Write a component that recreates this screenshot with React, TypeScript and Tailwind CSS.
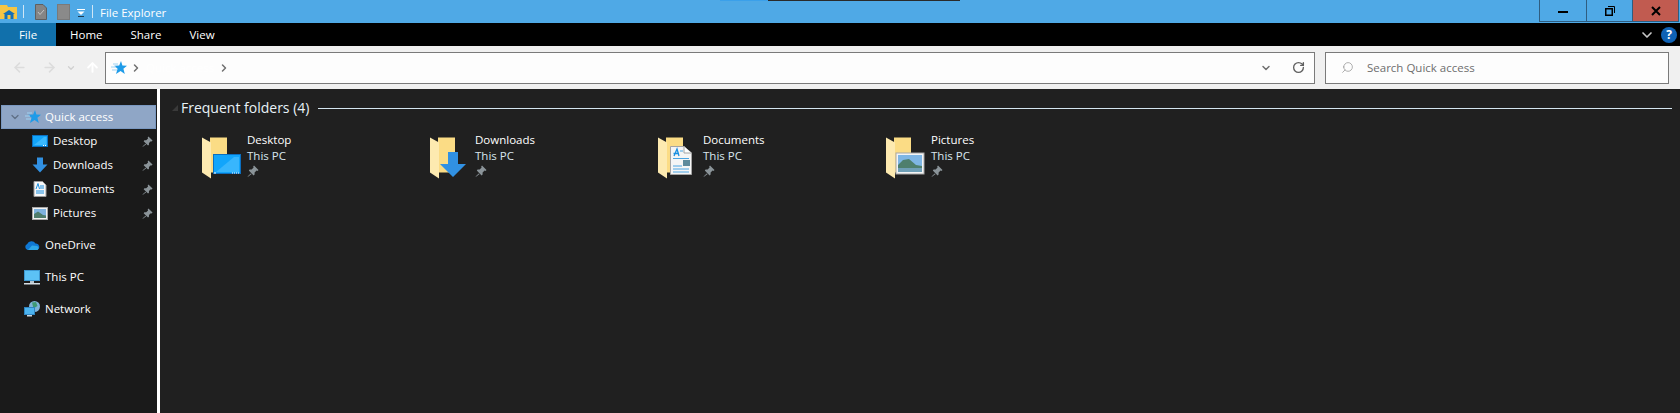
import { ArrowLeft, ArrowRight, ArrowUp, ChevronDown, ChevronRight, RotateCw, Search } from "lucide-react";

const font = "font-['Open_Sans','Noto_Sans',sans-serif]";

function Pin({ className = "" }: { className?: string }) {
  return (
    <svg viewBox="0 0 12 12" className={`w-3 h-3 ${className}`}>
      <path d="M7 0.5 L11.5 5 L10.5 6 L9.6 5.6 L7.6 7.6 L7.6 9.6 L6.6 10.4 L1.8 5.6 L2.6 4.6 L4.6 4.6 L6.6 2.6 L6.2 1.5 Z" fill="#8b9499" />
      <path d="M3.8 8.4 L0.5 11.5 L1 11.8 L4.6 9 Z" fill="#8b9499" />
    </svg>
  );
}

function StarIcon() {
  return (
    <svg viewBox="0 0 16 14" className="w-4 h-[14px]">
      <path d="M10 0 L11.4 4.6 L16 4.8 L12.4 7.8 L13.8 13 L9.6 10 L5 13 L6.6 7.8 L3.2 4.8 L8.2 4.6 Z" fill="#1e9be8" />
      <path d="M2 3 H7 M0 6 H5 M1 9 H6" stroke="#9fd2f2" strokeWidth="1" />
    </svg>
  );
}

function DesktopGlyph() {
  return (
    <svg viewBox="0 0 16 12" className="w-4 h-3">
      <rect x="0.5" y="0.5" width="15" height="11" fill="#12a5fb" stroke="#0b6fc0" />
      <path d="M2 10 L12 2 H14.5 V10 Z" fill="#3bb8fd" />
      <path d="M11 10.5 H15" stroke="#fff" strokeWidth="1" strokeDasharray="1 1" />
    </svg>
  );
}

function DownloadGlyph() {
  return (
    <svg viewBox="0 0 16 16" className="w-4 h-4">
      <path d="M5 0.5 H11 V7.5 H15.5 L8 15.5 L0.5 7.5 H5 Z" fill="#3191e3" />
    </svg>
  );
}

function DocumentGlyph() {
  return (
    <svg viewBox="0 0 14 16" className="w-[14px] h-4">
      <path d="M1 0.5 H9.5 L13 4 V15.5 H1 Z" fill="#f7f7f7" stroke="#9a9a9a" />
      <path d="M3 8 L5 2.5 L6.5 8 M3 10 H11 M3 12 H11 M7 5 H11 M7 7 H11" stroke="#1b8fe0" strokeWidth="1" fill="none" />
    </svg>
  );
}

function PictureGlyph() {
  return (
    <svg viewBox="0 0 16 13" className="w-4 h-[13px]">
      <rect x="0.5" y="0.5" width="15" height="12" fill="#f2f2f2" stroke="#a8a8a8" />
      <rect x="2" y="2" width="12" height="9" fill="#7fb2df" />
      <path d="M2 7 L6 4.5 L11 8 L14 8.5 V11 H2 Z" fill="#4f7d6c" />
    </svg>
  );
}

function FolderLarge({ overlay }: { overlay: "desktop" | "download" | "document" | "picture" }) {
  return (
    <svg viewBox="0 0 42 42" className="w-[42px] h-[42px] shrink-0">
      <path d="M9 0.5 H26 V35.5 H9 Z" fill="#fbdc85" />
      <path d="M1 0.5 L10 5.5 V41.5 L1 35.5 Z" fill="#fdeab0" />
      {overlay === "desktop" && (
        <g>
          <rect x="12.5" y="17.5" width="27" height="19" fill="#12a5fb" stroke="#0b6fc0" />
          <path d="M15 35 L33 20 H38 V35 Z" fill="#38b6fd" />
          <path d="M31 36 H39" stroke="#fff" strokeDasharray="1 1" />
          <path d="M13 36 H15" stroke="#fff" />
        </g>
      )}
      {overlay === "download" && <path d="M19 15 H29 V27 H37 L24 40 L11 27 H19 Z" fill="#3191e3" />}
      {overlay === "document" && (
        <g>
          <path d="M13.5 9.5 H27 L34.5 16 V37.5 H13.5 Z" fill="#f5f5f5" stroke="#a4a4a4" />
          <path d="M27 9.5 V16 H34.5" fill="#fff" stroke="#a4a4a4" />
          <path d="M17 19 L20 12 L22 19 M16.5 16.5 H22" stroke="#1b8fe0" fill="none" strokeWidth="1.3" />
          <path d="M23 14 H26 M16 21.5 H32 M16 29 H25 M16 32 H32 M16 35 H32" stroke="#4ba4e2" />
          <rect x="26" y="23" width="7" height="6" fill="#5d8a9c" />
        </g>
      )}
      {overlay === "picture" && (
        <g>
          <rect x="11" y="16" width="28" height="21" fill="#f4f4f4" stroke="#a8a8a8" />
          <rect x="13" y="18" width="24" height="17" fill="#7fb6e4" />
          <path d="M13 28 L18 23 L24 22 L31 28 L37 29 V35 H13 Z" fill="#4e7f6d" />
          <rect x="13" y="31" width="24" height="4" fill="#6f9fb6" />
        </g>
      )}
    </svg>
  );
}

function TreeRow({ icon, label, pinned }: { icon: React.ReactNode; label: string; pinned?: boolean }) {
  return (
    <div className="flex items-center h-6 pl-8 pr-[4px]">
      <div className="w-4 flex justify-center mr-[5px]">{icon}</div>
      <span className="text-[11.5px] text-white flex-1">{label}</span>
      {pinned && <Pin className="w-[11px] h-[11px]" />}
    </div>
  );
}

function RootRow({ icon, label }: { icon: React.ReactNode; label: string }) {
  return (
    <div className="flex items-center h-6 mt-2 pl-6">
      <div className="w-4 flex justify-center mr-[5px]">{icon}</div>
      <span className="text-[11.5px] text-white">{label}</span>
    </div>
  );
}

function FolderTile({ name, overlay }: { name: string; overlay: "desktop" | "download" | "document" | "picture" }) {
  return (
    <div className="flex w-[228px] gap-[4px]">
      <FolderLarge overlay={overlay} />
      <div className="flex flex-col text-[11.5px] leading-4 text-white -mt-[5px]">
        <span>{name}</span>
        <span className="text-[#d8e6ee]">This PC</span>
        <Pin className="mt-[1px]" />
      </div>
    </div>
  );
}

export default function App() {
  return (
    <div className={`relative w-[1680px] h-[413px] overflow-hidden flex flex-col bg-[#202020] ${font}`}>
      {/* taskbar sliver that shows above the window */}
      <div className="absolute top-0 left-[720px] w-12 h-px bg-[#3ba0ea]" />
      <div className="absolute top-0 left-[768px] w-[192px] h-px bg-[#2a2a2a]" />

      {/* title bar */}
      <div className="h-[23px] bg-[#4fa9e6] flex items-start shrink-0">
        <svg viewBox="0 0 17 15" className="w-[17px] h-[15px] mt-1">
          <path d="M0 1 H7 L8 3 H17 V15 H0 Z" fill="#f6c544" />
          <path d="M9 6 L15 10 H13.5 V15 H4.5 V10 H3 Z" fill="#1470b8" />
          <rect x="7.5" y="11" width="3" height="4" fill="#f6c544" />
        </svg>
        <div className="w-px h-[13px] bg-[#cfe6f6] ml-[6px] mt-[5px]" />
        <svg viewBox="0 0 12 16" className="w-3 h-4 ml-[11px] mt-1">
          <path d="M0.5 0.5 H8 L11.5 4 V15.5 H0.5 Z" fill="#858585" stroke="#5f5f5f" />
          <path d="M3 8 L5 10.5 L9 6" stroke="#c4c4c4" fill="none" strokeWidth="1" />
        </svg>
        <div className="w-[13px] h-4 bg-[#8a8a8a] border border-[#7a7a7a] ml-[10px] mt-1" />
        <svg viewBox="0 0 8 8" className="w-2 h-2 ml-[7px] mt-[9px]">
          <path d="M0 0.5 H8" stroke="#fff" />
          <path d="M0.5 2.5 H7.5 L4 6 Z" fill="#fff" />
          <path d="M1 7.5 H7" stroke="#1d3b52" />
        </svg>
        <div className="w-px h-[13px] bg-[#cfe6f6] ml-[7px] mt-[5px]" />
        <span className="text-[11.5px] text-white ml-[7px] mt-[4px]">File Explorer</span>
        <div className="flex-1" />
        <div className="flex h-[22px] border border-t-0 border-[#2f5d80] mr-px">
          <div className="w-[47px] flex items-center justify-center border-r border-[#2f5d80]">
            <div className="w-[10px] h-[2px] bg-black mt-[3px]" />
          </div>
          <div className="w-[46px] flex items-center justify-center border-r border-[#2f5d80]">
            <svg viewBox="0 0 10 10" className="w-[10px] h-[10px]">
              <rect x="0.75" y="2.75" width="6.5" height="6.5" fill="none" stroke="#000" strokeWidth="1.5" />
              <path d="M3 0.5 H9.5 V7" fill="none" stroke="#000" />
            </svg>
          </div>
          <div className="w-[45px] flex items-center justify-center bg-[#c15b50]">
            <svg viewBox="0 0 10 10" className="w-[10px] h-[10px]">
              <path d="M1 1 L9 9 M9 1 L1 9" stroke="#000" strokeWidth="2" />
            </svg>
          </div>
        </div>
      </div>

      {/* ribbon tabs */}
      <div className="h-[23px] bg-black flex items-center shrink-0 text-[11.5px] text-white">
        <div className="w-14 h-full bg-[#1170ab] flex items-center justify-center">File</div>
        <span className="ml-[14px]">Home</span>
        <span className="ml-[28px]">Share</span>
        <span className="ml-[28px]">View</span>
        <div className="flex-1" />
        <ChevronDown className="w-4 h-4 text-[#c8c8c8] mr-[6px]" strokeWidth={2.5} />
        <div className="w-4 h-4 rounded-full bg-[#0f62b5] flex items-center justify-center text-[12px] font-bold mr-[3px]">?</div>
      </div>

      {/* address row */}
      <div className="h-[43px] bg-[#f0f0f0] flex items-center shrink-0">
        <div className="w-[105px] flex items-center pl-3">
          <ArrowLeft className="w-[15px] h-[15px] text-[#dcdcdc]" strokeWidth={2.5} />
          <ArrowRight className="w-[15px] h-[15px] text-[#dcdcdc] ml-[15px]" strokeWidth={2.5} />
          <ChevronDown className="w-[10px] h-[10px] text-[#d0d0d0] ml-[9px]" strokeWidth={3} />
          <ArrowUp className="w-[15px] h-[15px] text-white ml-[9px]" strokeWidth={3} />
        </div>
        <div className="w-[1210px] h-8 border border-[#7a7a7a] bg-[#fdfdfd] flex items-center pl-[5px] pr-[8px]">
          <StarIcon />
          <ChevronRight className="w-3 h-3 text-[#707070] ml-[3px]" strokeWidth={3} />
          <span className="text-[11.5px] text-white ml-[4px]">Quick access</span>
          <ChevronRight className="w-3 h-3 text-[#707070] ml-[4px]" strokeWidth={3} />
          <div className="flex-1" />
          <ChevronDown className="w-3 h-3 text-[#707070]" strokeWidth={3} />
          <RotateCw className="w-[13px] h-[13px] text-[#606060] ml-[20px] mr-[1px]" strokeWidth={2.5} />
        </div>
        <div className="w-[344px] h-8 ml-[10px] border border-[#7a7a7a] bg-[#fdfdfd] flex items-center pl-[15px]">
          <Search className="w-[13px] h-[13px] text-[#8a8a8a] -scale-x-100" strokeWidth={1.25} />
          <span className="text-[11.5px] text-[#6d6d6d] ml-[13px]">Search Quick access</span>
        </div>
      </div>

      {/* body */}
      <div className="flex-1 flex min-h-0">
        <aside className="w-[157px] bg-[#1a1a1a] pt-4 shrink-0">
          <div className="h-6 mx-px bg-[#8fa6c6] border border-[#7a98c0] flex items-center pl-[7px]">
            <ChevronDown className="w-3 h-3 text-[#5f6f85]" strokeWidth={2.5} />
            <div className="w-4 ml-[4px] mr-[4px] flex justify-center"><StarIcon /></div>
            <span className="text-[11.5px] text-white">Quick access</span>
          </div>
          <TreeRow icon={<DesktopGlyph />} label="Desktop" pinned />
          <TreeRow icon={<DownloadGlyph />} label="Downloads" pinned />
          <TreeRow icon={<DocumentGlyph />} label="Documents" pinned />
          <TreeRow icon={<PictureGlyph />} label="Pictures" pinned />
          <RootRow
            label="OneDrive"
            icon={
              <svg viewBox="0 0 16 10" className="w-4 h-[10px]">
                <path d="M3.5 10 A3.2 3.2 0 0 1 3.2 4 A4.6 4.6 0 0 1 11.5 3.6 A3.3 3.3 0 0 1 13 10 Z" fill="#0f78d4" />
                <path d="M4 10 L8 5.5 L13 6 A2.2 2.2 0 0 1 13.5 10 Z" fill="#2ea8e8" />
              </svg>
            }
          />
          <RootRow
            label="This PC"
            icon={
              <svg viewBox="0 0 16 15" className="w-4 h-[15px]">
                <rect x="0.5" y="0.5" width="15" height="10" fill="#5cc2f5" stroke="#3e98d0" />
                <rect x="6" y="11" width="4" height="2" fill="#b7c7d2" />
                <rect x="0" y="13" width="16" height="1.5" fill="#d5dee4" />
              </svg>
            }
          />
          <RootRow
            label="Network"
            icon={
              <svg viewBox="0 0 16 16" className="w-4 h-4">
                <circle cx="10.5" cy="5.5" r="5.5" fill="#7fb4d9" />
                <path d="M8 1.5 L12 1 L13.5 5 L9.5 7.5 Z" fill="#3f9a74" />
                <rect x="0.5" y="6.5" width="10" height="7" fill="#4cb4f0" stroke="#2f86c2" />
                <rect x="3" y="14" width="5" height="1.5" fill="#c9d5dd" />
              </svg>
            }
          />
        </aside>
        <div className="w-[3px] bg-white shrink-0" />
        <main className="flex-1 bg-[#202020] pr-[8px] pt-[9px]">
          <div className="flex items-center h-[20px] pl-3">
            <svg viewBox="0 0 6 6" className="w-[6px] h-[6px] mr-[3px]">
              <path d="M6 0 V6 H0 Z" fill="#3a3a3a" />
            </svg>
            <span className="text-sm text-[#e8f2f8]">Frequent folders (4)</span>
            <div className="flex-1 h-px bg-[#d4e6f0] ml-[9px]" />
          </div>
          <div className="flex pl-[41px] mt-[19px]">
            <FolderTile name="Desktop" overlay="desktop" />
            <FolderTile name="Downloads" overlay="download" />
            <FolderTile name="Documents" overlay="document" />
            <FolderTile name="Pictures" overlay="picture" />
          </div>
        </main>
      </div>
    </div>
  );
}
